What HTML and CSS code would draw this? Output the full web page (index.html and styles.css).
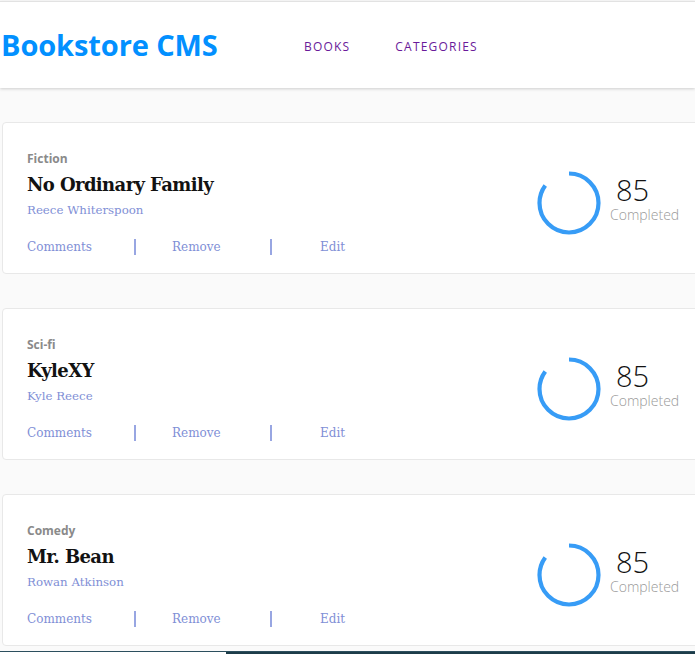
FILE: index.html
```html
<!DOCTYPE html>
<html lang="en">
<head>
<meta charset="utf-8">
<title>Bookstore CMS</title>
<link rel="stylesheet" href="styles.css">
</head>
<body>
<header class="header">
  <h1 class="logo">Bookstore CMS</h1>
  <nav class="nav">
    <a class="nav-link" href="#">BOOKS</a>
    <a class="nav-link" href="#">CATEGORIES</a>
  </nav>
</header>
<main class="books">
  <article class="card">
    <div class="info">
      <span class="genre">Fiction</span>
      <h2 class="title">No Ordinary Family</h2>
      <span class="author">Reece Whiterspoon</span>
      <div class="actions">
        <button class="action">Comments</button>
        <span class="sep"></span>
        <button class="action">Remove</button>
        <span class="sep"></span>
        <button class="action">Edit</button>
      </div>
    </div>
    <div class="progress">
      <svg class="ring" width="66" height="66" viewBox="0 0 66 66">
        <circle cx="33" cy="33" r="29.5" fill="none" stroke="#379cf6" stroke-width="4.2" stroke-dasharray="157.5 27.8" transform="rotate(-90 33 33)"/>
      </svg>
      <div class="stats">
        <span class="percent">85</span>
        <span class="done">Completed</span>
      </div>
    </div>
  </article>
  <article class="card">
    <div class="info">
      <span class="genre">Sci-fi</span>
      <h2 class="title">KyleXY</h2>
      <span class="author">Kyle Reece</span>
      <div class="actions">
        <button class="action">Comments</button>
        <span class="sep"></span>
        <button class="action">Remove</button>
        <span class="sep"></span>
        <button class="action">Edit</button>
      </div>
    </div>
    <div class="progress">
      <svg class="ring" width="66" height="66" viewBox="0 0 66 66">
        <circle cx="33" cy="33" r="29.5" fill="none" stroke="#379cf6" stroke-width="4.2" stroke-dasharray="157.5 27.8" transform="rotate(-90 33 33)"/>
      </svg>
      <div class="stats">
        <span class="percent">85</span>
        <span class="done">Completed</span>
      </div>
    </div>
  </article>
  <article class="card">
    <div class="info">
      <span class="genre">Comedy</span>
      <h2 class="title">Mr. Bean</h2>
      <span class="author">Rowan Atkinson</span>
      <div class="actions">
        <button class="action">Comments</button>
        <span class="sep"></span>
        <button class="action">Remove</button>
        <span class="sep"></span>
        <button class="action">Edit</button>
      </div>
    </div>
    <div class="progress">
      <svg class="ring" width="66" height="66" viewBox="0 0 66 66">
        <circle cx="33" cy="33" r="29.5" fill="none" stroke="#379cf6" stroke-width="4.2" stroke-dasharray="157.5 27.8" transform="rotate(-90 33 33)"/>
      </svg>
      <div class="stats">
        <span class="percent">85</span>
        <span class="done">Completed</span>
      </div>
    </div>
  </article>
</main>
<div class="taskbar"></div>
</body>
</html>
```
FILE: styles.css
```css
html {
  overflow: hidden;
}

body {
  margin: 0;
  background: #fafafa;
  font-family: "Open Sans", "Liberation Sans", sans-serif;
  color: #121212;
}

.header {
  margin-top: 1px;
  border-top: 1px solid #e2e2e2;
  height: 86px;
  background: #fff;
  box-shadow: 0 1px 3px rgba(0, 0, 0, 0.18);
  display: flex;
  align-items: center;
  padding-left: 1px;
}

.logo {
  margin: 0 0 2px;
  font-family: "Open Sans", sans-serif;
  font-weight: 700;
  font-size: 29px;
  letter-spacing: -0.1px;
  color: #0290ff;
  width: 303px;
}

.nav {
  display: flex;
  gap: 45px;
  margin-top: 2px;
}

.nav-link {
  font-family: "Open Sans", sans-serif;
  font-size: 12px;
  letter-spacing: 1.2px;
  color: #6a1a9a;
  text-decoration: none;
}

.books {
  display: flex;
  flex-direction: column;
  gap: 34px;
  padding: 34px 0 0 2px;
}

.card {
  width: 760px;
  height: 150px;
  box-sizing: content-box;
  background: #fff;
  border: 1px solid #e8e8e8;
  border-radius: 4px;
  display: flex;
  align-items: center;
}

.info {
  display: flex;
  flex-direction: column;
  padding-left: 24px;
  width: 480px;
  padding-top: 10px;
}

.genre {
  font-family: "Open Sans", sans-serif;
  font-weight: 700;
  font-size: 12px;
  color: #8a8a8a;
  line-height: 16px;
}

.title {
  margin: 6px 0 0;
  font-family: "DejaVu Serif", serif;
  font-weight: 700;
  font-size: 18px;
  line-height: 24px;
  letter-spacing: -0.6px;
  color: #121212;
}

.author {
  margin-top: 1px;
  font-family: "DejaVu Serif", serif;
  font-weight: 300;
  font-size: 11.8px;
  line-height: 24px;
  color: #7f8fd6;
}

.actions {
  display: flex;
  align-items: center;
  margin-top: 17px;
}

.action {
  border: 0;
  background: none;
  padding: 0;
  font-family: "DejaVu Serif", serif;
  font-size: 12px;
  color: #7f8fd6;
}

.action:first-child {
  width: 107px;
  text-align: left;
}

.sep {
  width: 2px;
  height: 16px;
  background: #98a6e2;
}

.action:nth-child(3) {
  width: 98px;
  margin-left: 36px;
  text-align: left;
}

.action:nth-child(5) {
  margin-left: 48px;
}

.progress {
  display: flex;
  align-items: center;
  margin-left: 30px;
  margin-top: 10px;
}

.ring {
  margin-left: -1px;
}

.stats {
  display: flex;
  flex-direction: column;
  margin-left: 8px;
  margin-top: -4px;
}

.percent {
  font-family: "Open Sans", sans-serif;
  font-weight: 300;
  font-size: 29px;
  line-height: 26px;
  color: #121212;
  padding-left: 6px;
}

.done {
  margin-top: 2px;
  font-family: "Open Sans", sans-serif;
  font-weight: 300;
  font-size: 14px;
  color: #999;
  line-height: 20px;
}

.taskbar {
  position: fixed;
  left: 0;
  right: 0;
  bottom: 0;
  height: 3px;
  border-top: 1px solid #2c4f5e;
  background: linear-gradient(to right, #fff 0, #fff 226px, #1d3c49 226px);
  box-sizing: border-box;
}
```
